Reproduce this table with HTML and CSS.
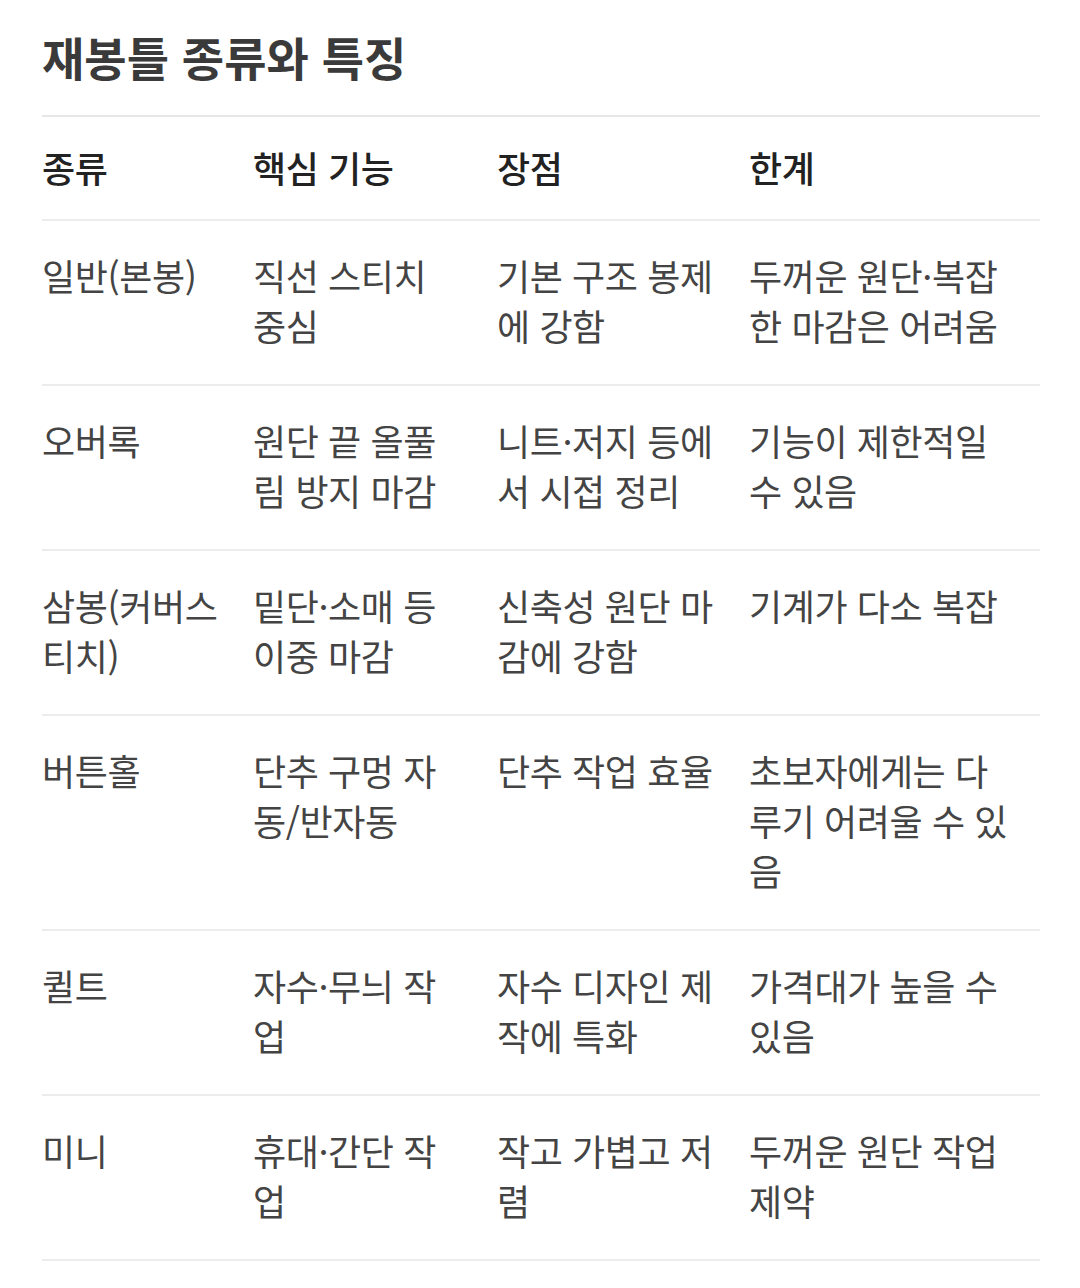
FILE: index.html
```html
<!DOCTYPE html>
<html lang="ko">
<head>
<meta charset="utf-8">
<link rel="stylesheet" href="styles.css">
</head>
<body>
<main class="page">
  <h1 class="title">재봉틀 종류와 특징</h1>
  <table class="spec">
    <colgroup>
      <col class="c1"><col class="c2"><col class="c3"><col class="c4">
    </colgroup>
    <thead>
      <tr><th>종류</th><th>핵심 기능</th><th>장점</th><th>한계</th></tr>
    </thead>
    <tbody>
      <tr><td>일반(본봉)</td><td>직선 스티치 중심</td><td>기본 구조 봉제에 강함</td><td>두꺼운 원단·복잡한 마감은 어려움</td></tr>
      <tr><td>오버록</td><td>원단 끝 올풀림 방지 마감</td><td>니트·저지 등에서 시접 정리</td><td>기능이 제한적일 수 있음</td></tr>
      <tr><td>삼봉(커버스티치)</td><td>밑단·소매 등 이중 마감</td><td>신축성 원단 마감에 강함</td><td>기계가 다소 복잡</td></tr>
      <tr><td>버튼홀</td><td>단추 구멍 자동/반자동</td><td>단추 작업 효율</td><td>초보자에게는 다루기 어려울 수 있음</td></tr>
      <tr><td>퀼트</td><td>자수·무늬 작업</td><td>자수 디자인 제작에 특화</td><td>가격대가 높을 수 있음</td></tr>
      <tr><td>미니</td><td>휴대·간단 작업</td><td>작고 가볍고 저렴</td><td>두꺼운 원단 작업 제약</td></tr>
    </tbody>
  </table>
</main>
</body>
</html>
```
FILE: styles.css
```css
html, body {
  margin: 0;
  padding: 0;
  background: #ffffff;
}
body {
  font-family: "Noto Sans CJK KR", "Noto Sans", sans-serif;
  color: #444444;
}
.page {
  padding: 0 40px 0 42px;
}
.title {
  margin: 0;
  padding: 25px 0 28px;
  font-size: 46px;
  line-height: 62px;
  font-weight: 700;
  color: #3a3a3a;
  letter-spacing: 0;
  border-bottom: 2px solid #e6e6e6;
}
.spec {
  width: 100%;
  border-collapse: collapse;
  table-layout: fixed;
}
.c1 { width: 211px; }
.c2 { width: 244px; }
.c3 { width: 252px; }
.c4 { width: auto; }
.spec th,
.spec td {
  text-align: left;
  vertical-align: top;
  font-size: 36px;
  line-height: 50px;
  padding: 29px 33px 34px 0;
  border-bottom: 2px solid #ececec;
  letter-spacing: -0.4px;
}
.spec th:last-child,
.spec td:last-child {
  padding-right: 27px;
}
.spec th {
  padding-top: 25px;
  padding-bottom: 27px;
  font-weight: 500;
  color: #222222;
}
.spec td {
  font-weight: 400;
  color: #444444;
}
```
